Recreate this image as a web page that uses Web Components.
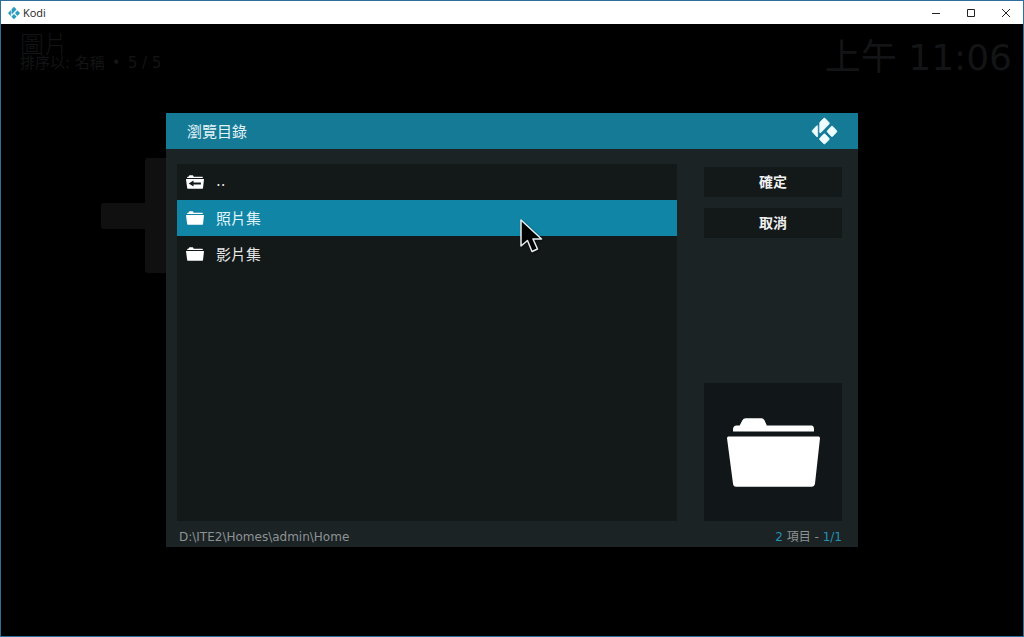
<!DOCTYPE html>
<html lang="zh-Hant">
<head>
<meta charset="utf-8">
<title>Kodi</title>
<style>
html, body { height: 100%; margin: 0; }
body { background: #000; font-family: "DejaVu Sans", "Noto Sans CJK TC", sans-serif; }
</style>
</head>
<body>
<kodi-window></kodi-window>
<script>
function define(name, html) {
  const template = document.createElement('template');
  template.innerHTML = html;
  customElements.define(name, class extends HTMLElement {
    constructor() {
      super();
      this.attachShadow({ mode: 'open' }).append(template.content.cloneNode(true));
    }
  });
}

define('kodi-logo', `
<style>
:host { display: block; width: 25px; height: 26px; }
svg { display: block; width: 100%; height: 100%; overflow: visible; fill: currentColor; stroke: currentColor; stroke-width: 2; }
</style>
<svg viewBox="0 0 75 78" aria-hidden="true">
  <path d="M34.500 1.500Q37 -1 39.500 1.500L51 13.500Q53 16 51 18.500L26.500 43.500Q23 46.500 23 42V16Q23 13.500 25 11.500Z"/>
  <path d="M57.500 25.500Q60 23 62.500 25.500L73.500 37.500Q76 40 73.500 42.500L62.500 54.500Q60 57 57.500 54.500L46.500 42.500Q44 40 46.500 37.500Z"/>
  <path d="M34.500 48.500Q37 46 39.500 48.500L51 60.500Q53 63 51 65.500L39.500 76.500Q37 79 34.500 76.500L23.500 65.500Q21 63 23.500 60.500Z"/>
  <path d="M1.500 37L13.500 24Q17 20.500 17 25V54Q17 58.500 13.500 55.500L1.500 42Q-1 39.500 1.500 37Z"/>
</svg>`);

define('folder-icon', `
<style>
:host { display: block; width: 18px; height: 14px; flex: none; }
svg { display: block; width: 100%; height: 100%; fill: #fff; }
.arrow { display: none; fill: #131819; }
:host([up]) .arrow { display: block; }
</style>
<svg viewBox="0 0 278 205" aria-hidden="true">
  <path d="M18 40V32Q19 23 28 22H38L46 6Q49 0 56 0H102Q109 0 112 6L119 22H252Q260 23 260 32V40Z"/>
  <path d="M4 55H274Q278 55 278 60L263 196Q261 205 253 205H27Q19 205 18 196L0 60Q0 55 4 55Z"/>
  <path class="arrow" d="M42 126L116 80V112H230V140H116V172Z"/>
</svg>`);

define('window-bar', `
<style>
:host { display: flex; align-items: center; height: 23px; flex: none; background: #fff; color: #222; }
kodi-logo { width: 12px; height: 12px; margin: 0 3px 0 7px; color: #2a9dbd; }
h1 { flex: 1; margin: 0; font: 11px/16px "Open Sans", sans-serif; }
button { display: grid; place-items: center; width: 35px; height: 22px; border: 0; padding: 0; background: none; color: #222; }
svg { width: 10px; height: 10px; fill: none; stroke: currentColor; }
</style>
<kodi-logo></kodi-logo>
<h1><slot></slot></h1>
<button aria-label="最小化"><svg viewBox="0 0 10 10"><path d="M1 5.500H9"/></svg></button>
<button aria-label="最大化"><svg viewBox="0 0 10 10"><path d="M1.500 1.500H8.500V8.500H1.500Z"/></svg></button>
<button aria-label="關閉"><svg viewBox="0 0 10 10"><path d="M1 1L9 9M9 1L1 9"/></svg></button>`);

define('media-header', `
<style>
:host { display: flex; justify-content: space-between; align-items: flex-start; padding: 10px 11px 0 19px; color: #131415; }
h2 { margin: 0; font-size: 24px; font-weight: 300; line-height: 22px; }
p { display: flex; gap: 7px; margin: 0; font-size: 15px; line-height: 14px; }
time { font-size: 36px; line-height: 48px; }
</style>
<div><h2>圖片</h2><p><span>排序以: 名稱</span><span>•</span><span>5 / 5</span></p></div>
<time datetime="11:06">上午 11:06</time>`);

define('file-row', `
<style>
:host { display: block; }
button { display: flex; align-items: center; gap: 12px; width: 100%; height: 36px; padding: 0 9px; border: 0; background: none; color: #e6e8e8; font: inherit; font-size: 15px; text-align: left; }
span { padding-bottom: 2px; }
:host([selected]) button { background: #1085a6; color: #e4f5fa; }
</style>
<button><folder-icon></folder-icon><span><slot></slot></span></button>`);

define('dialog-button', `
<style>
:host { display: block; }
button { display: block; width: 100%; height: 30px; padding: 0 0 2px; border: 0; background: #131819; color: #f0f0f0; font: inherit; font-size: 14px; font-weight: bold; }
</style>
<button><slot></slot></button>`);

define('browse-dialog', `
<style>
:host { display: flex; flex-direction: column; background: #1b2325; }
header { display: flex; align-items: center; justify-content: space-between; height: 36px; padding: 0 21px; background: #157a96; color: #e3f4f8; }
h2 { margin: 0; padding-bottom: 2px; font-size: 15px; font-weight: normal; }
kodi-logo { color: #effdff; }
main { flex: 1; display: grid; grid-template-columns: 1fr 138px; gap: 27px; padding: 15px 16px 0 11px; }
.list { background: #131819; }
aside { display: flex; flex-direction: column; gap: 11px; padding-top: 3px; }
.thumb { display: grid; place-items: center; height: 138px; margin-top: auto; background: #111718; }
.thumb folder-icon { width: 93px; height: 69px; }
footer { display: flex; justify-content: space-between; padding: 6px 16px 0 13px; color: #8d9293; font-size: 12px; line-height: 20px; }
b { font-weight: normal; color: #2492b5; }
</style>
<header><h2>瀏覽目錄</h2><kodi-logo></kodi-logo></header>
<main>
  <div class="list"><slot></slot></div>
  <aside>
    <dialog-button>確定</dialog-button>
    <dialog-button>取消</dialog-button>
    <div class="thumb"><folder-icon></folder-icon></div>
  </aside>
</main>
<footer><span>D:\\ITE2\\Homes\\admin\\Home</span><span><b>2</b> 項目 - <b>1/1</b></span></footer>`);

define('kodi-window', `
<style>
:host { display: flex; flex-direction: column; box-sizing: border-box; min-height: 100vh; border: 1px solid #2f6f9c; }
.stage { position: relative; flex: 1; display: grid; background: #000; overflow: hidden; }
.stage > media-header, .overlay { grid-area: 1 / 1; }
.overlay { display: grid; padding: 89px 165px; }
.plus { position: absolute; left: 100px; top: 134px; width: 160px; height: 115px; fill: #101010; }
.pointer { position: absolute; left: 518px; top: 194px; width: 24px; height: 36px; filter: drop-shadow(1px 1px 1px #0006); }
browse-dialog { position: relative; }
</style>
<window-bar>Kodi</window-bar>
<div class="stage">
  <media-header></media-header>
  <svg class="plus" viewBox="0 0 160 115" aria-hidden="true"><rect x="44" width="26" height="115" rx="3"/><rect y="45" width="160" height="26" rx="3"/><rect x="60" width="40" height="115"/></svg>
  <div class="overlay">
    <browse-dialog>
      <file-row><slot></slot>..</file-row>
      <file-row selected>照片集</file-row>
      <file-row>影片集</file-row>
    </browse-dialog>
  </div>
  <svg class="pointer" viewBox="0 0 24 36" aria-hidden="true"><path d="M2 2V28L8.500 22.500L13 33.500L18.500 31L14 21H22.500Z" fill="#000" stroke="#e8eef0" stroke-width="1.500" stroke-linejoin="round"/></svg>
</div>`);

// The first row leads to the parent folder, so its icon carries the arrow.
document.querySelector('kodi-window').shadowRoot.querySelector('file-row')
  .shadowRoot.querySelector('folder-icon').setAttribute('up', '');
</script>
</body>
</html>
